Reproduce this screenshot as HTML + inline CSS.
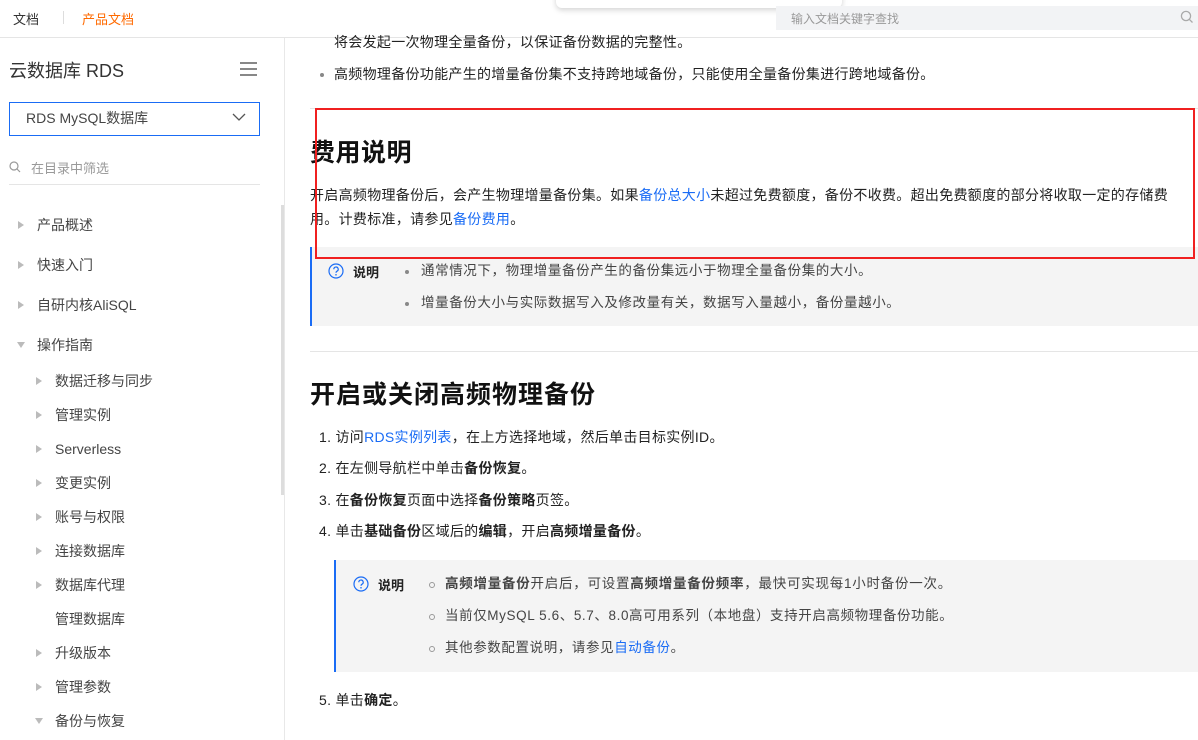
<!DOCTYPE html>
<html><head><meta charset="utf-8"><style>
*{margin:0;padding:0;box-sizing:border-box}
body{width:1198px;height:740px;overflow:hidden;background:#fff;font-family:"Liberation Sans","Noto Sans CJK SC",sans-serif;color:#333;position:relative}
.a{position:absolute;white-space:nowrap}
.c{font-size:14px;letter-spacing:0.3px;color:#222;line-height:20px}
.s{font-size:14px;color:#444;line-height:20px}
.tri{position:absolute;width:0;height:0;border-left:6px solid #bbb;border-top:4px solid transparent;border-bottom:4px solid transparent}
.tri.d{border-top:6px solid #bbb;border-left:4px solid transparent;border-right:4px solid transparent;border-bottom:0}
a{color:#1a6cf5;text-decoration:none}
b{font-weight:bold}
.dot{position:absolute;width:4px;height:4px;border-radius:50%;background:#888}
.ring{position:absolute;width:6px;height:6px;border-radius:50%;border:1.2px solid #999}
</style></head><body>
<div class="a" style="left:0;top:37px;width:1198px;height:1px;background:#e5e5e5"></div>
<div class="a" style="left:13px;top:9px;font-size:13px;color:#333">文档</div>
<div class="a" style="left:63px;top:11px;width:1px;height:13px;background:#ddd"></div>
<div class="a" style="left:82px;top:9px;font-size:13px;color:#ff6a00">产品文档</div>
<div class="a" style="left:556px;top:-10px;width:286px;height:18px;background:#fff;border-radius:6px;box-shadow:0 2px 6px rgba(0,0,0,.18)"></div>
<div class="a" style="left:776px;top:6px;width:422px;height:24px;background:#f2f3f5"></div>
<div class="a" style="left:791px;top:10px;font-size:12px;color:#999">输入文档关键字查找</div>
<svg class="a" style="left:1180px;top:10px" width="14" height="14" viewBox="0 0 14 14"><circle cx="6" cy="6" r="4.6" fill="none" stroke="#aaa" stroke-width="1.3"/><path d="M9.4 9.4L12.5 12.5" stroke="#aaa" stroke-width="1.3"/></svg>
<div class="a" style="left:284px;top:38px;width:1px;height:702px;background:#e8e8e8"></div>
<div class="a" style="left:281px;top:205px;width:3px;height:290px;background:#ddd"></div>
<div class="a" style="left:9px;top:57px;font-size:18px;color:#333">云数据库 RDS</div>
<div class="a" style="left:240px;top:62px;width:17px;height:2px;background:#888"></div>
<div class="a" style="left:240px;top:68px;width:17px;height:2px;background:#888"></div>
<div class="a" style="left:240px;top:74px;width:17px;height:2px;background:#888"></div>
<div class="a" style="left:9px;top:102px;width:251px;height:34px;border:1px solid #1a6cf5"></div>
<div class="a" style="left:26px;top:108px;font-size:14px;color:#444">RDS MySQL数据库</div>
<svg class="a" style="left:232px;top:113px" width="14" height="9" viewBox="0 0 14 9"><path d="M1 1L7 7L13 1" fill="none" stroke="#555" stroke-width="1.3"/></svg>
<svg class="a" style="left:9px;top:161px" width="12" height="12" viewBox="0 0 12 12"><circle cx="5" cy="5" r="4" fill="none" stroke="#999" stroke-width="1.2"/><path d="M8 8L11 11" stroke="#999" stroke-width="1.2"/></svg>
<div class="a" style="left:31px;top:158px;font-size:13px;color:#999">在目录中筛选</div>
<div class="a" style="left:9px;top:184px;width:251px;height:1px;background:#e5e5e5"></div>
<div class="tri" style="left:18px;top:221px"></div><div class="a s" style="left:37px;top:215px">产品概述</div>
<div class="tri" style="left:18px;top:261px"></div><div class="a s" style="left:37px;top:255px">快速入门</div>
<div class="tri" style="left:18px;top:301px"></div><div class="a s" style="left:37px;top:295px">自研内核AliSQL</div>
<div class="tri d" style="left:17px;top:342px"></div><div class="a s" style="left:37px;top:335px">操作指南</div>
<div class="tri" style="left:36px;top:377px"></div><div class="a s" style="left:55px;top:371px">数据迁移与同步</div>
<div class="tri" style="left:36px;top:411px"></div><div class="a s" style="left:55px;top:405px">管理实例</div>
<div class="tri" style="left:36px;top:445px"></div><div class="a s" style="left:55px;top:439px">Serverless</div>
<div class="tri" style="left:36px;top:479px"></div><div class="a s" style="left:55px;top:473px">变更实例</div>
<div class="tri" style="left:36px;top:513px"></div><div class="a s" style="left:55px;top:507px">账号与权限</div>
<div class="tri" style="left:36px;top:547px"></div><div class="a s" style="left:55px;top:541px">连接数据库</div>
<div class="tri" style="left:36px;top:581px"></div><div class="a s" style="left:55px;top:575px">数据库代理</div>
<div class="a s" style="left:55px;top:609px">管理数据库</div>
<div class="tri" style="left:36px;top:649px"></div><div class="a s" style="left:55px;top:643px">升级版本</div>
<div class="tri" style="left:36px;top:683px"></div><div class="a s" style="left:55px;top:677px">管理参数</div>
<div class="tri d" style="left:35px;top:718px"></div><div class="a s" style="left:55px;top:711px">备份与恢复</div>
<div class="a c" style="left:334px;top:32px">将会发起一次物理全量备份，以保证备份数据的完整性。</div>
<div class="dot" style="left:320px;top:73px"></div>
<div class="a c" style="left:334px;top:64px">高频物理备份功能产生的增量备份集不支持跨地域备份，只能使用全量备份集进行跨地域备份。</div>
<div class="a" style="left:310px;top:108px;width:888px;height:1px;background:#e5e5e5"></div>
<div class="a" style="left:310px;top:133px;font-size:25px;font-weight:bold;color:#111;letter-spacing:0.5px">费用说明</div>
<div class="a c" style="left:310px;top:185px">开启高频物理备份后，会产生物理增量备份集。如果<a>备份总大小</a>未超过免费额度，备份不收费。超出免费额度的部分将收取一定的存储费</div>
<div class="a c" style="left:310px;top:209px">用。计费标准，请参见<a>备份费用</a>。</div>
<div class="a" style="left:310px;top:247px;width:888px;height:79px;background:#f4f4f4;border-left:2px solid #1a6cf5"></div>
<svg class="a" style="left:328px;top:263px" width="16" height="16" viewBox="0 0 16 16"><circle cx="8" cy="8" r="7" fill="none" stroke="#1a6cf5" stroke-width="1.2"/><path d="M5.8 6.2a2.2 2.2 0 1 1 3.2 2c-.7.4-1 .8-1 1.6" fill="none" stroke="#1a6cf5" stroke-width="1.2"/><circle cx="8" cy="11.8" r=".8" fill="#1a6cf5"/></svg>
<div class="a" style="left:353px;top:262px;font-size:13px;font-weight:bold;color:#222">说明</div>
<div class="dot" style="left:405px;top:270px"></div>
<div class="a c" style="left:421px;top:261px;font-size:13.5px;color:#444;letter-spacing:0.6px">通常情况下，物理增量备份产生的备份集远小于物理全量备份集的大小。</div>
<div class="dot" style="left:405px;top:302px"></div>
<div class="a c" style="left:421px;top:293px;font-size:13.5px;color:#444;letter-spacing:0.6px">增量备份大小与实际数据写入及修改量有关，数据写入量越小，备份量越小。</div>
<div class="a" style="left:310px;top:351px;width:888px;height:1px;background:#e5e5e5"></div>
<div class="a" style="left:310px;top:375px;font-size:25px;font-weight:bold;color:#111;letter-spacing:1px">开启或关闭高频物理备份</div>
<div class="a c" style="left:319px;top:427px">1. 访问<a>RDS实例列表</a>，在上方选择地域，然后单击目标实例ID。</div>
<div class="a c" style="left:319px;top:458px">2. 在左侧导航栏中单击<b>备份恢复</b>。</div>
<div class="a c" style="left:319px;top:490px">3. 在<b>备份恢复</b>页面中选择<b>备份策略</b>页签。</div>
<div class="a c" style="left:319px;top:521px">4. 单击<b>基础备份</b>区域后的<b>编辑</b>，开启<b>高频增量备份</b>。</div>
<div class="a" style="left:334px;top:560px;width:864px;height:112px;background:#f4f4f4;border-left:2px solid #1a6cf5"></div>
<svg class="a" style="left:353px;top:576px" width="16" height="16" viewBox="0 0 16 16"><circle cx="8" cy="8" r="7" fill="none" stroke="#1a6cf5" stroke-width="1.2"/><path d="M5.8 6.2a2.2 2.2 0 1 1 3.2 2c-.7.4-1 .8-1 1.6" fill="none" stroke="#1a6cf5" stroke-width="1.2"/><circle cx="8" cy="11.8" r=".8" fill="#1a6cf5"/></svg>
<div class="a" style="left:378px;top:575px;font-size:13px;font-weight:bold;color:#222">说明</div>
<div class="ring" style="left:429px;top:582px"></div>
<div class="a c" style="left:445px;top:574px;font-size:13.5px;color:#444;letter-spacing:0.75px"><b>高频增量备份</b>开启后，可设置<b>高频增量备份频率</b>，最快可实现每1小时备份一次。</div>
<div class="ring" style="left:429px;top:614px"></div>
<div class="a c" style="left:445px;top:606px;font-size:13.5px;color:#444;letter-spacing:0.6px">当前仅MySQL 5.6、5.7、8.0高可用系列（本地盘）支持开启高频物理备份功能。</div>
<div class="ring" style="left:429px;top:646px"></div>
<div class="a c" style="left:445px;top:638px;font-size:13.5px;color:#444;letter-spacing:0.6px">其他参数配置说明，请参见<a>自动备份</a>。</div>
<div class="a c" style="left:319px;top:690px">5. 单击<b>确定</b>。</div>
<div class="a" style="left:315px;top:108px;width:880px;height:151px;border:2px solid #f02020"></div>
</body></html>
